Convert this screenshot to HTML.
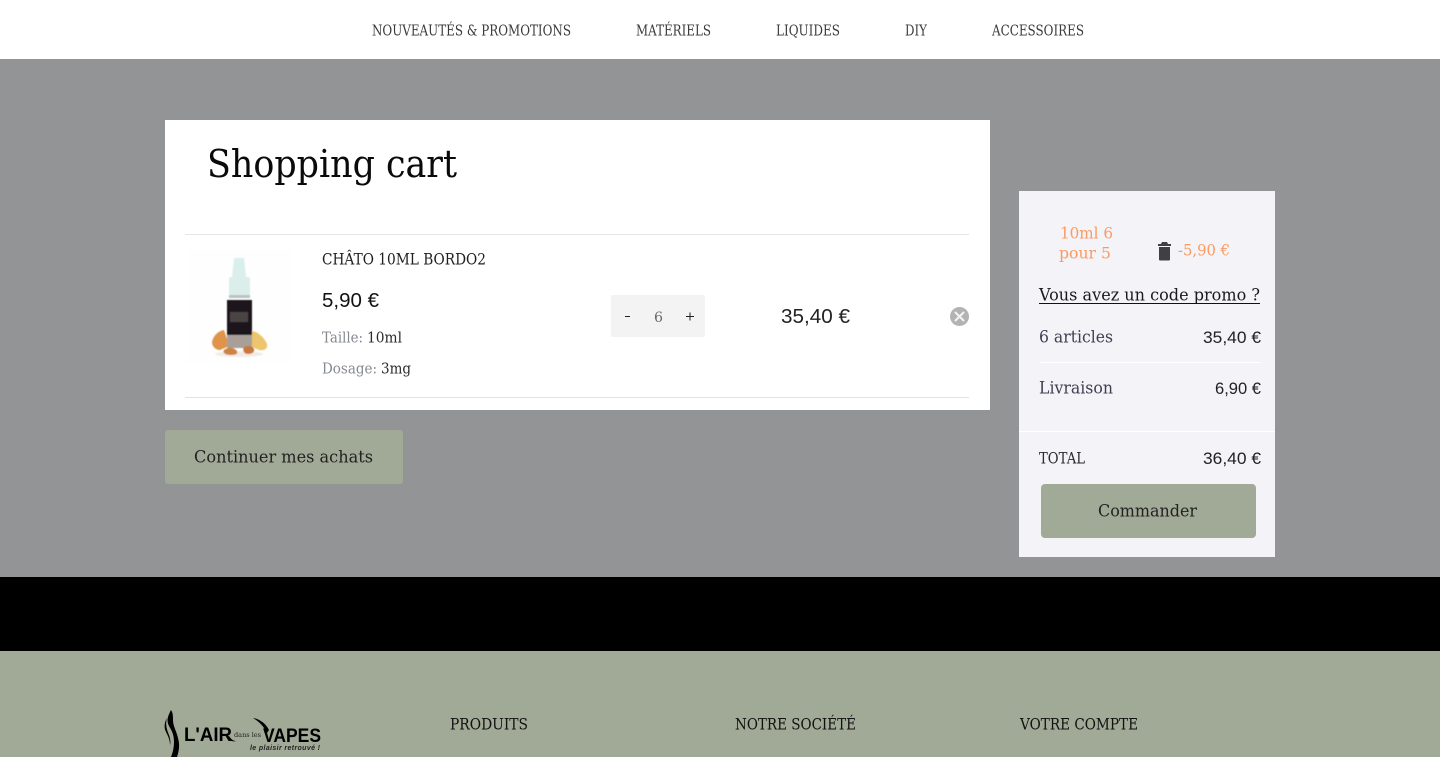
<!DOCTYPE html>
<html lang="fr"><head><meta charset="utf-8"><title>Shopping cart</title>
<style>
html,body{margin:0;padding:0;width:1440px;height:757px;overflow:hidden;background:#939496}
svg{display:block}
text{font-family:"DejaVu Serif","Liberation Serif",serif;white-space:pre}
.s{font-family:"Liberation Sans",sans-serif}
</style></head><body>
<svg width="1440" height="757" viewBox="0 0 1440 757" xmlns="http://www.w3.org/2000/svg">
<defs><filter id="b" x="-5%" y="-5%" width="110%" height="110%"><feGaussianBlur stdDeviation="0.4"/></filter></defs>
<rect width="1440" height="59" fill="#fff"/>
<rect y="59" width="1440" height="518" fill="#939496"/>
<rect y="577" width="1440" height="74" fill="#000"/>
<rect y="651" width="1440" height="106" fill="#a1a997"/>

<g font-size="15" fill="#3a3a3a">
<text x="372" y="35.500" textLength="199" lengthAdjust="spacingAndGlyphs">NOUVEAUTÉS &amp; PROMOTIONS</text>
<text x="636" y="35.500" textLength="75" lengthAdjust="spacingAndGlyphs">MATÉRIELS</text>
<text x="776" y="35.500" textLength="64" lengthAdjust="spacingAndGlyphs">LIQUIDES</text>
<text x="905" y="35.500" textLength="22" lengthAdjust="spacingAndGlyphs">DIY</text>
<text x="992" y="35.500" textLength="92" lengthAdjust="spacingAndGlyphs">ACCESSOIRES</text>
</g>

<rect x="165" y="120" width="825" height="290" fill="#fff"/>
<text x="207" y="177" font-size="38" fill="#0a0a0a" textLength="250" lengthAdjust="spacingAndGlyphs">Shopping cart</text>
<rect x="185" y="234" width="784" height="1" fill="#e6e6e6"/>
<rect x="185" y="397" width="784" height="1" fill="#e3e3e3"/>

<rect x="187" y="250" width="105" height="113" fill="#fefefe"/>
<g filter="url(#b)">
<ellipse cx="239" cy="354" rx="24" ry="3" fill="#f1ece6"/>
<path d="M234 258h10l2 19h-14z" fill="#d9efeb"/>
<rect x="229" y="277" width="21" height="19" rx="2" fill="#dceeea"/>
<rect x="229" y="295" width="21" height="3" fill="#b9c3c0"/>
<rect x="227" y="300" width="25" height="35" fill="#1e191a"/>
<rect x="230" y="312" width="18" height="10" fill="#4a4545"/>
<rect x="227" y="335" width="25" height="13" fill="#a8a098"/>
<path d="M212 342c1-6 6-11 12-12l3 9v8l-7 3c-5 0-8-4-8-8z" fill="#df9448"/>
<path d="M252 331c6 1 12 6 15 13 1 4-2 7-8 6l-7-3z" fill="#edc56c"/>
<path d="M224 350c4-3 9-3 12 0 3 3 1 5-5 5-5 0-9-2-7-5z" fill="#cf8340"/>
<path d="M244 347c4-2 9-1 10 2 1 3-2 5-6 5-4 0-6-4-4-7z" fill="#c9783d"/>
</g>

<text x="322" y="264.500" font-size="15.500" fill="#1f1f1f" textLength="164" lengthAdjust="spacingAndGlyphs">CHÂTO 10ML BORDO2</text>
<text class="s" x="322" y="307" font-size="20" fill="#111" textLength="57" lengthAdjust="spacingAndGlyphs">5,90 €</text>
<text x="322" y="342.500" font-size="15" fill="#858a90" textLength="41" lengthAdjust="spacingAndGlyphs">Taille:</text>
<text x="367" y="342.500" font-size="15" fill="#2a2a2a" textLength="35" lengthAdjust="spacingAndGlyphs">10ml</text>
<text x="322" y="373.500" font-size="15" fill="#858a90" textLength="55" lengthAdjust="spacingAndGlyphs">Dosage:</text>
<text x="381" y="373.500" font-size="15" fill="#2a2a2a" textLength="30" lengthAdjust="spacingAndGlyphs">3mg</text>

<rect x="611" y="295" width="94" height="42" rx="2" fill="#f3f3f3"/>
<rect x="625" y="316" width="5" height="1" fill="#222"/>
<text x="654" y="322" font-size="14" fill="#666" textLength="9" lengthAdjust="spacingAndGlyphs">6</text>
<path d="M686 316.500h8M690 312.500v8" stroke="#222" stroke-width="1"/>
<text class="s" x="781" y="323" font-size="20" fill="#222" textLength="69" lengthAdjust="spacingAndGlyphs">35,40 €</text>
<circle cx="959.500" cy="316.500" r="9.500" fill="#b3b3b3"/>
<path d="M955 312l9 9M964 312l-9 9" stroke="#f4f4f4" stroke-width="2"/>

<rect x="165" y="430" width="238" height="54" rx="3" fill="#a1a997"/>
<text x="194" y="462.500" font-size="16.500" fill="#222" textLength="179" lengthAdjust="spacingAndGlyphs">Continuer mes achats</text>

<rect x="1019" y="191" width="256" height="366" fill="#f3f3f8"/>
<g fill="#fb9b62" font-size="16">
<text x="1060" y="238.500" textLength="53" lengthAdjust="spacingAndGlyphs">10ml 6</text>
<text x="1059" y="258.500" textLength="52" lengthAdjust="spacingAndGlyphs">pour 5</text>
<text x="1178" y="255.500" textLength="52" lengthAdjust="spacingAndGlyphs">-5,90 €</text>
</g>
<path d="M1158 244h3l1-2h5l1 2h3v2h-13zM1159 247h11v12.500a1 1 0 0 1-1 1h-9a1 1 0 0 1-1-1z" fill="#3f3f44"/>
<text x="1039" y="300.500" font-size="16.500" fill="#1a1a1a" textLength="221" lengthAdjust="spacingAndGlyphs">Vous avez un code promo ?</text>
<rect x="1039" y="303" width="221" height="1" fill="#111"/>
<text x="1039" y="342.500" font-size="16.500" fill="#403e50" textLength="74" lengthAdjust="spacingAndGlyphs">6 articles</text>
<text class="s" x="1203" y="343" font-size="17" fill="#222" textLength="58" lengthAdjust="spacingAndGlyphs">35,40 €</text>
<rect x="1039" y="362" width="222" height="1" fill="#fff"/>
<text x="1039" y="393.500" font-size="16.500" fill="#403e50" textLength="74" lengthAdjust="spacingAndGlyphs">Livraison</text>
<text class="s" x="1215" y="394" font-size="17" fill="#222" textLength="46" lengthAdjust="spacingAndGlyphs">6,90 €</text>
<rect x="1019" y="431" width="256" height="1" fill="#fff"/>
<text x="1039" y="463.500" font-size="15.500" fill="#2a2a2a" textLength="46" lengthAdjust="spacingAndGlyphs">TOTAL</text>
<text class="s" x="1203" y="464" font-size="17" fill="#222" textLength="58" lengthAdjust="spacingAndGlyphs">36,40 €</text>
<rect x="1041" y="484" width="215" height="54" rx="4" fill="#a1a997"/>
<text x="1098" y="516.500" font-size="16.500" fill="#222" textLength="99" lengthAdjust="spacingAndGlyphs">Commander</text>

<g font-size="16" fill="#111">
<text x="450" y="729.500" textLength="78" lengthAdjust="spacingAndGlyphs">PRODUITS</text>
<text x="735" y="729.500" textLength="121" lengthAdjust="spacingAndGlyphs">NOTRE SOCIÉTÉ</text>
<text x="1020" y="729.500" textLength="118" lengthAdjust="spacingAndGlyphs">VOTRE COMPTE</text>
</g>

<path d="M171 710c-3 6-5 10-2 16 3 5 5 9 5 16 0 5-1 10-3 15h6c2-6 3-12 1-19-2-8-5-12-5-18 0-4 0-7-2-10z" fill="#000"/>
<path d="M167 718c-3 5-3 10-1 14 2 4 4 8 4 13 1-3 0-7-1-10-2-5-4-10-2-17z" fill="#000"/>
<text class="s" x="184" y="741" font-size="19" font-weight="700" fill="#000" textLength="48" lengthAdjust="spacingAndGlyphs">L'AIR</text>
<path d="M229 736c2 3 4 5 7 5-3 1-6 0-8-3z" fill="#000"/>
<text x="234" y="737" font-size="6" fill="#222" textLength="27" lengthAdjust="spacingAndGlyphs">dans les</text>
<path d="M253 718c7 1 13 6 16 12l-2 3c-3-6-7-11-14-15z" fill="#000"/>
<text class="s" x="263" y="742" font-size="19.500" font-weight="700" fill="#000" textLength="58" lengthAdjust="spacingAndGlyphs">VAPES</text>
<text class="s" x="250" y="750" font-size="7" font-weight="700" font-style="italic" fill="#222" textLength="70">le plaisir retrouvé !</text>
</svg>
</body></html>
